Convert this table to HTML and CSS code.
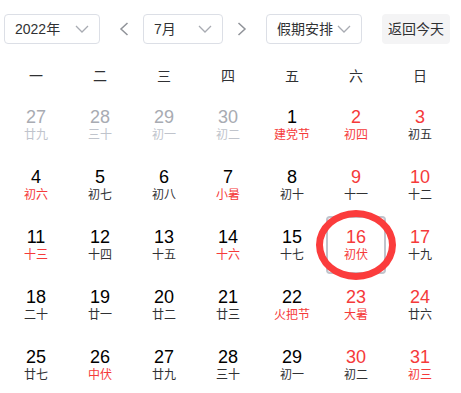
FILE: index.html
```html
<!DOCTYPE html>
<html lang="zh">
<head>
<meta charset="utf-8">
<link rel="stylesheet" href="styles.css">
</head>
<body>
<div class="page">
  <div class="toolbar">
    <div class="select sel-year"><span class="sel-text">2022年</span><svg class="chev" width="14" height="8" viewBox="0 0 14 8"><polyline points="1,1 7,7 13,1" fill="none" stroke="#a8abb2" stroke-width="1.3"/></svg></div>
    <div class="arrow arrow-prev"><svg width="10" height="14" viewBox="0 0 10 14"><polyline points="8.5,1 2,7 8.5,13" fill="none" stroke="#909399" stroke-width="1.5"/></svg></div>
    <div class="select sel-month"><span class="sel-text">7月</span><svg class="chev" width="14" height="8" viewBox="0 0 14 8"><polyline points="1,1 7,7 13,1" fill="none" stroke="#a8abb2" stroke-width="1.3"/></svg></div>
    <div class="arrow arrow-next"><svg width="10" height="14" viewBox="0 0 10 14"><polyline points="1.5,1 8,7 1.5,13" fill="none" stroke="#909399" stroke-width="1.5"/></svg></div>
    <div class="select sel-holiday"><span class="sel-text">假期安排</span><svg class="chev" width="14" height="8" viewBox="0 0 14 8"><polyline points="1,1 7,7 13,1" fill="none" stroke="#a8abb2" stroke-width="1.3"/></svg></div>
    <div class="today-btn">返回今天</div>
  </div>

  <div class="calendar">
    <div class="weekdays">
      <div class="wd">一</div><div class="wd">二</div><div class="wd">三</div><div class="wd">四</div><div class="wd">五</div><div class="wd">六</div><div class="wd">日</div>
    </div>
    <div class="days">
      <div class="cell other"><span class="num">27</span><span class="lunar">廿九</span></div>
      <div class="cell other"><span class="num">28</span><span class="lunar">三十</span></div>
      <div class="cell other"><span class="num">29</span><span class="lunar">初一</span></div>
      <div class="cell other"><span class="num">30</span><span class="lunar">初二</span></div>
      <div class="cell"><span class="num">1</span><span class="lunar red">建党节</span></div>
      <div class="cell"><span class="num red">2</span><span class="lunar red">初四</span></div>
      <div class="cell"><span class="num red">3</span><span class="lunar">初五</span></div>

      <div class="cell"><span class="num">4</span><span class="lunar red">初六</span></div>
      <div class="cell"><span class="num">5</span><span class="lunar">初七</span></div>
      <div class="cell"><span class="num">6</span><span class="lunar">初八</span></div>
      <div class="cell"><span class="num">7</span><span class="lunar red">小暑</span></div>
      <div class="cell"><span class="num">8</span><span class="lunar">初十</span></div>
      <div class="cell"><span class="num red">9</span><span class="lunar">十一</span></div>
      <div class="cell"><span class="num red">10</span><span class="lunar">十二</span></div>

      <div class="cell"><span class="num">11</span><span class="lunar red">十三</span></div>
      <div class="cell"><span class="num">12</span><span class="lunar">十四</span></div>
      <div class="cell"><span class="num">13</span><span class="lunar">十五</span></div>
      <div class="cell"><span class="num">14</span><span class="lunar red">十六</span></div>
      <div class="cell"><span class="num">15</span><span class="lunar">十七</span></div>
      <div class="cell selected"><span class="num red">16</span><span class="lunar red">初伏</span><span class="ring"></span></div>
      <div class="cell"><span class="num red">17</span><span class="lunar">十九</span></div>

      <div class="cell"><span class="num">18</span><span class="lunar">二十</span></div>
      <div class="cell"><span class="num">19</span><span class="lunar">廿一</span></div>
      <div class="cell"><span class="num">20</span><span class="lunar">廿二</span></div>
      <div class="cell"><span class="num">21</span><span class="lunar">廿三</span></div>
      <div class="cell"><span class="num">22</span><span class="lunar red">火把节</span></div>
      <div class="cell"><span class="num red">23</span><span class="lunar red">大暑</span></div>
      <div class="cell"><span class="num red">24</span><span class="lunar">廿六</span></div>

      <div class="cell"><span class="num">25</span><span class="lunar">廿七</span></div>
      <div class="cell"><span class="num">26</span><span class="lunar red">中伏</span></div>
      <div class="cell"><span class="num">27</span><span class="lunar">廿九</span></div>
      <div class="cell"><span class="num">28</span><span class="lunar">三十</span></div>
      <div class="cell"><span class="num">29</span><span class="lunar">初一</span></div>
      <div class="cell"><span class="num red">30</span><span class="lunar">初二</span></div>
      <div class="cell"><span class="num red">31</span><span class="lunar red">初三</span></div>
    </div>
  </div>
</div>
</body>
</html>
```

FILE: styles.css
```css
html, body {
  margin: 0;
  padding: 0;
  background: #fff;
}
body {
  font-family: "Liberation Sans", "Noto Sans CJK SC", sans-serif;
  color: #303133;
  overflow: hidden;
}
.page {
  padding: 14px 0 0 4px;
  width: 448px;
}
.toolbar {
  display: flex;
  align-items: center;
  height: 30px;
}
.select {
  box-sizing: border-box;
  height: 30px;
  border: 1px solid #dcdfe6;
  border-radius: 4px;
  display: flex;
  align-items: center;
  justify-content: space-between;
  padding: 0 10px 0 10px;
  font-size: 14px;
  color: #303133;
}
.sel-text {
  line-height: 20px;
  white-space: nowrap;
}
.chev {
  display: block;
  flex: none;
}
.sel-year { width: 96px; }
.sel-month { width: 80px; }
.sel-holiday { width: 96px; padding-right: 10px; }
.arrow {
  width: 24px;
  height: 30px;
  display: flex;
  align-items: center;
  justify-content: center;
}
.arrow svg { display: block; }
.arrow-prev { margin: 0 7px 0 12px; }
.arrow-next { margin: 0 12px 0 7px; }
.today-btn {
  margin-left: 20px;
  width: 68px;
  height: 30px;
  box-sizing: border-box;
  border-radius: 4px;
  background: #f4f4f5;
  font-size: 14px;
  line-height: 30px;
  text-align: center;
  color: #303133;
  white-space: nowrap;
}
.calendar {
  margin-top: 12px;
}
.weekdays {
  display: grid;
  grid-template-columns: repeat(7, 64px);
  height: 40px;
  align-items: center;
}
.wd {
  text-align: center;
  font-size: 14px;
  color: #303133;
  line-height: 20px;
}
.days {
  display: grid;
  grid-template-columns: repeat(7, 64px);
  grid-auto-rows: 60px;
}
.cell {
  position: relative;
  box-sizing: border-box;
  width: 60px;
  height: 58px;
  margin: 0 auto;
  border: 2px solid transparent;
  border-radius: 4px;
  display: flex;
  flex-direction: column;
  align-items: center;
  justify-content: center;
}
.num {
  font-size: 18px;
  line-height: 20px;
  color: #000;
}
.lunar {
  font-size: 12px;
  line-height: 17px;
  color: #303133;
  white-space: nowrap;
}
.red { color: #f53a3a; }
.other .num { color: #a8abb2; }
.other .lunar { color: #c0c4cc; }
.selected {
  border-color: #c0c4cc;
}
.ring {
  position: absolute;
  left: -12px;
  top: -8px;
  width: 80px;
  height: 70px;
  box-sizing: border-box;
  border: 7px solid #fb3c3c;
  border-radius: 50%;
}
```
